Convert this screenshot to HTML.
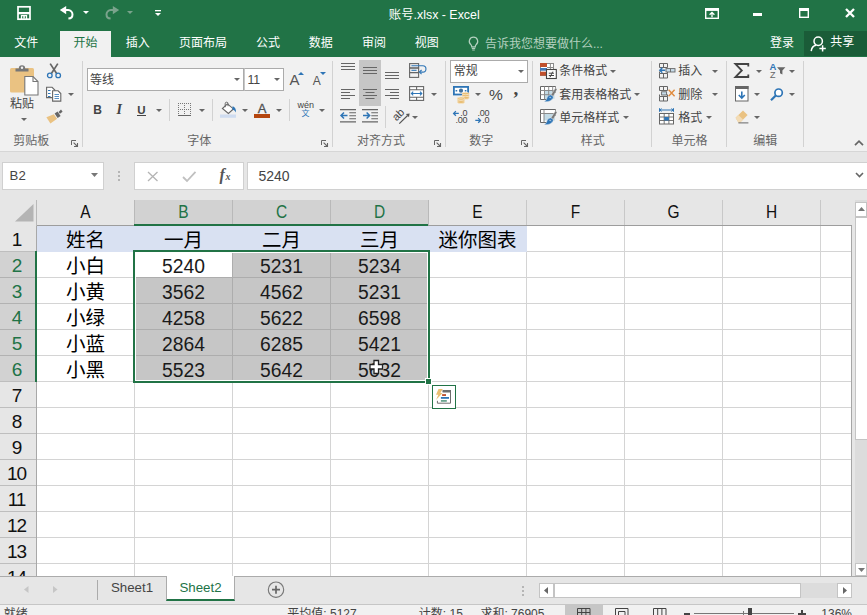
<!DOCTYPE html>
<html lang="zh-CN"><head><meta charset="utf-8"><title>账号.xlsx - Excel</title>
<style>
html,body{margin:0;padding:0}
body{width:867px;height:615px;overflow:hidden;position:relative;background:#e6e6e6;font-family:"Liberation Sans","Noto Sans CJK SC",sans-serif}
.b,.t,.i{position:absolute}
.b{box-sizing:border-box}
.t{white-space:nowrap;line-height:20px;height:20px}
.i{overflow:visible}
</style></head>
<body>
<!-- title bar -->
<div class="b" style="left:0px;top:0px;width:867px;height:57px;background:#217346;"></div>
<svg class="i" style="left:17px;top:6px;" width="14" height="14" viewBox="0 0 14 14"><rect x="1" y=".8" width="12" height="12.400" fill="none" stroke="#fff" stroke-width="1.700"/><rect x="1" y="6" width="12" height="2.300" fill="#fff"/><path d="M4.500 13V9.600h5V13" fill="none" stroke="#fff" stroke-width="1.300"/><rect x="6.300" y="9.600" width="1.500" height="3" fill="#fff"/></svg>
<svg class="i" style="left:59px;top:5px;" width="16" height="15" viewBox="0 0 16 15"><path d="M6 5.100H9.200A4.300 4.300 0 0 1 13.500 9.400C13.500 12 12 13.300 9.400 13.500" fill="none" stroke="#fff" stroke-width="2"/><path d="M.8 5.100L7.200 .9V9.300z" fill="#fff"/></svg>
<svg class="i" style="left:83px;top:11px;" width="6" height="3" viewBox="0 0 6 3"><path d="M0 0h6L3 3z" fill="#fff"/></svg>
<svg class="i" style="left:104px;top:5px;" width="16" height="15" viewBox="0 0 16 15"><path d="M10 5.100H6.800A4.300 4.300 0 0 0 2.500 9.400C2.500 12 4 13.300 6.600 13.500" fill="none" stroke="#7aa38c" stroke-width="2"/><path d="M15.200 5.100L8.800 .9V9.300z" fill="#7aa38c"/></svg>
<svg class="i" style="left:127px;top:11px;" width="6" height="3" viewBox="0 0 6 3"><path d="M0 0h6L3 3z" fill="#7aa38c"/></svg>
<svg class="i" style="left:155px;top:9px;" width="6" height="8" viewBox="0 0 6 8"><rect x="0" y="1" width="6" height="1.300" fill="#fff"/><path d="M0 4h6L3 7z" fill="#fff"/></svg>
<div class="t" style="left:388.8px;top:4.5px;font-size:12.4px;color:#fff;">账号.xlsx - Excel</div>
<svg class="i" style="left:705px;top:7.5px;" width="14" height="11" viewBox="0 0 14 11"><rect x=".7" y=".7" width="12.600" height="9.600" fill="none" stroke="#fff" stroke-width="1.400"/><rect x=".7" y=".7" width="12.600" height="2.200" fill="#fff"/><path d="M7 4.600v4.600M4.600 6.800L7 4.400l2.400 2.400" fill="none" stroke="#fff" stroke-width="1.300"/></svg>
<div class="b" style="left:753px;top:13px;width:9px;height:3px;background:#fff;"></div>
<svg class="i" style="left:799px;top:8px;" width="10" height="10" viewBox="0 0 10 10"><rect x=".7" y=".7" width="8.600" height="8.600" fill="none" stroke="#fff" stroke-width="1.400"/><rect x="0" y="0" width="10" height="3" fill="#fff"/></svg>
<svg class="i" style="left:845px;top:8px;" width="10" height="10" viewBox="0 0 10 10"><path d="M1 1l8 8M9 1l-8 8" stroke="#fff" stroke-width="2.300" fill="none"/></svg>
<!-- ribbon tabs -->
<div class="b" style="left:60px;top:31px;width:51px;height:26px;background:#f1f1f1;"></div>
<div class="t" style="left:14.3px;top:33.0px;font-size:12px;color:#fff;">文件</div>
<div class="t" style="left:73.4px;top:33.0px;font-size:12px;color:#217346;">开始</div>
<div class="t" style="left:125.7px;top:33.0px;font-size:12px;color:#fff;">插入</div>
<div class="t" style="left:179px;top:33.0px;font-size:12px;color:#fff;">页面布局</div>
<div class="t" style="left:256px;top:33.0px;font-size:12px;color:#fff;">公式</div>
<div class="t" style="left:308.7px;top:33.0px;font-size:12px;color:#fff;">数据</div>
<div class="t" style="left:362px;top:33.0px;font-size:12px;color:#fff;">审阅</div>
<div class="t" style="left:414.7px;top:33.0px;font-size:12px;color:#fff;">视图</div>
<svg class="i" style="left:468px;top:36px;" width="11" height="15" viewBox="0 0 11 15"><path d="M5.500 1.200a4.200 4.200 0 0 0-2.600 7.500c.6.6.8 1.300.8 2.100h3.600c0-.8.2-1.500.8-2.100A4.200 4.200 0 0 0 5.500 1.200z" fill="none" stroke="#b3d0bf" stroke-width="1.200"/><path d="M3.800 12.400h3.400M4.200 14h2.600" stroke="#b3d0bf" stroke-width="1.100"/></svg>
<div class="t" style="left:484.9px;top:33.6px;font-size:12px;color:#b3d0bf;">告诉我您想要做什么...</div>
<div class="t" style="left:770.1px;top:32.6px;font-size:12px;color:#fff;">登录</div>
<div class="b" style="left:804px;top:31px;width:63px;height:25px;background:#1a5c38;"></div>
<svg class="i" style="left:810px;top:36px;" width="17" height="16" viewBox="0 0 17 16"><circle cx="8.200" cy="5.200" r="4.200" fill="none" stroke="#fff" stroke-width="1.500"/><path d="M1.200 15.200c.4-3.600 2.500-5.600 4.800-6" fill="none" stroke="#fff" stroke-width="1.500"/><path d="M12.600 9.200v6.400M9.400 12.400h6.400" stroke="#fff" stroke-width="1.500"/></svg>
<div class="t" style="left:830.3px;top:32.2px;font-size:12px;color:#fff;">共享</div>
<!-- ribbon -->
<div class="b" style="left:0px;top:57px;width:867px;height:94px;background:#f1f1f1;"></div>
<div class="b" style="left:0px;top:151px;width:867px;height:1px;background:#d6d6d6;"></div>
<svg class="i" style="left:10px;top:63px;" width="29" height="33" viewBox="0 0 29 33"><rect x="0" y="5" width="24" height="24.500" rx="1.500" fill="#eac282"/><path d="M5.500 8.500v-3h3.300a3.200 3.200 0 0 1 6.400 0h3.300v3z" fill="#777"/><circle cx="12" cy="4.800" r="1.200" fill="#f1f1f1"/><path d="M14.800 13.500h8.200l5 5v13.500h-13.200z" fill="#fff" stroke="#777" stroke-width="1.100"/><path d="M23 13.500v5h5" fill="none" stroke="#777" stroke-width="1.100"/></svg>
<div class="t" style="left:10px;top:94.3px;font-size:12px;color:#444;">粘贴</div>
<svg class="i" style="left:21px;top:118px;" width="6" height="3" viewBox="0 0 6 3"><path d="M0 0h6L3 3z" fill="#666"/></svg>
<svg class="i" style="left:46px;top:63px;" width="16" height="16" viewBox="0 0 16 16"><path d="M4.200 .6L10.600 10.500M11.800 .6L5.400 10.500" stroke="#666" stroke-width="1.700" fill="none"/><circle cx="3.800" cy="12.400" r="2.300" fill="none" stroke="#2e75b6" stroke-width="1.300"/><circle cx="12.200" cy="12.400" r="2.300" fill="none" stroke="#2e75b6" stroke-width="1.300"/></svg>
<svg class="i" style="left:46px;top:86px;" width="16" height="16" viewBox="0 0 16 16"><path d="M.6 1.300h5.500l2.700 2.700v7.600H.6z" fill="#fff" stroke="#666" stroke-width="1.100"/><path d="M6.600 4.800h5.500l2.700 2.700v7.600H6.600z" fill="#fff" stroke="#666" stroke-width="1.100"/><path d="M2 4.500h2.500M2 7.500h2.500M2 10.500h2.500" stroke="#2e75b6" stroke-width="1"/><path d="M8.500 8.500h4.500M8.500 10.500h4.500M8.500 12.500h4.500" stroke="#2e75b6" stroke-width=".8"/></svg>
<svg class="i" style="left:68px;top:93px;" width="6" height="3" viewBox="0 0 6 3"><path d="M0 0h6L3 3z" fill="#666"/></svg>
<svg class="i" style="left:46px;top:109px;" width="17" height="15" viewBox="0 0 17 15"><path d="M.4 8.200L7.800 5.200l3.300 4.600L4.400 14.400z" fill="#eac282"/><path d="M8.600 4.600l3-2 3 4.400-3 2z" fill="#666"/><path d="M12.600 3l2.400-2.400 1.600 2.200-2.600 2z" fill="#666"/></svg>
<div class="t" style="left:13.3px;top:130.6px;font-size:12px;color:#666;">剪贴板</div>
<svg class="i" style="left:71px;top:140px;" width="7" height="7" viewBox="0 0 7 7"><path d="M.5 5V.5H5" fill="none" stroke="#666" stroke-width="1"/><path d="M2.600 2.600L6 6M6.500 3v3.500H3" fill="none" stroke="#666" stroke-width="1.100"/></svg>
<div class="b" style="left:82px;top:61px;width:1px;height:86px;background:#d2d2d2;"></div>
<div class="b" style="left:87px;top:68px;width:157px;height:23px;background:#fff;border:1px solid #ababab;"></div>
<div class="b" style="left:244px;top:68px;width:40px;height:23px;background:#fff;border:1px solid #ababab;border-left-color:#c8c8c8;"></div>
<div class="t" style="left:90px;top:69.5px;font-size:12px;color:#444;">等线</div>
<svg class="i" style="left:234px;top:78px;" width="6" height="3" viewBox="0 0 6 3"><path d="M0 0h6L3 3z" fill="#666"/></svg>
<div class="t" style="left:247.4px;top:69.6px;font-size:12.4px;color:#444;">11</div>
<svg class="i" style="left:274px;top:78px;" width="6" height="3" viewBox="0 0 6 3"><path d="M0 0h6L3 3z" fill="#666"/></svg>
<div class="t" style="left:289.6px;top:70.3px;font-size:15px;color:#555;">A</div>
<svg class="i" style="left:298px;top:72px;" width="6" height="3" viewBox="0 0 6 3"><path d="M0 3h6L3 0z" fill="#2e75b6"/></svg>
<div class="t" style="left:312.8px;top:71.2px;font-size:12px;color:#555;">A</div>
<svg class="i" style="left:320px;top:72px;" width="6" height="3" viewBox="0 0 6 3"><path d="M0 0h6L3 3z" fill="#2e75b6"/></svg>
<div class="t" style="left:93.2px;top:100.0px;font-size:12px;color:#444;font-weight:bold;">B</div>
<div class="t" style="left:116.4px;top:100.0px;font-size:14px;color:#444;font-weight:bold;font-style:italic;font-family:'Liberation Serif',serif;">I</div>
<div class="t" style="left:137.2px;top:99.8px;font-size:11.5px;color:#444;font-weight:bold;">U</div>
<div class="b" style="left:137px;top:115px;width:9px;height:1px;background:#444;"></div>
<svg class="i" style="left:156px;top:109px;" width="6" height="3" viewBox="0 0 6 3"><path d="M0 0h6L3 3z" fill="#666"/></svg>
<div class="b" style="left:169px;top:99px;width:1px;height:22px;background:#d2d2d2;"></div>
<svg class="i" style="left:178px;top:103px;" width="13" height="13" viewBox="0 0 13 13"><g fill="#777" shape-rendering="crispEdges"><rect x="0" y="0" width="1" height="1"/><rect x="0" y="0" width="1" height="1"/><rect x="0" y="6" width="1" height="1"/><rect x="6" y="0" width="1" height="1"/><rect x="0" y="12" width="1" height="1"/><rect x="12" y="0" width="1" height="1"/><rect x="2" y="0" width="1" height="1"/><rect x="0" y="2" width="1" height="1"/><rect x="2" y="6" width="1" height="1"/><rect x="6" y="2" width="1" height="1"/><rect x="2" y="12" width="1" height="1"/><rect x="12" y="2" width="1" height="1"/><rect x="4" y="0" width="1" height="1"/><rect x="0" y="4" width="1" height="1"/><rect x="4" y="6" width="1" height="1"/><rect x="6" y="4" width="1" height="1"/><rect x="4" y="12" width="1" height="1"/><rect x="12" y="4" width="1" height="1"/><rect x="6" y="0" width="1" height="1"/><rect x="0" y="6" width="1" height="1"/><rect x="6" y="6" width="1" height="1"/><rect x="6" y="6" width="1" height="1"/><rect x="6" y="12" width="1" height="1"/><rect x="12" y="6" width="1" height="1"/><rect x="8" y="0" width="1" height="1"/><rect x="0" y="8" width="1" height="1"/><rect x="8" y="6" width="1" height="1"/><rect x="6" y="8" width="1" height="1"/><rect x="8" y="12" width="1" height="1"/><rect x="12" y="8" width="1" height="1"/><rect x="10" y="0" width="1" height="1"/><rect x="0" y="10" width="1" height="1"/><rect x="10" y="6" width="1" height="1"/><rect x="6" y="10" width="1" height="1"/><rect x="10" y="12" width="1" height="1"/><rect x="12" y="10" width="1" height="1"/><rect x="12" y="0" width="1" height="1"/><rect x="0" y="12" width="1" height="1"/><rect x="12" y="6" width="1" height="1"/><rect x="6" y="12" width="1" height="1"/><rect x="12" y="12" width="1" height="1"/><rect x="12" y="12" width="1" height="1"/></g><rect x="0" y="12" width="13" height="1" fill="#666" shape-rendering="crispEdges"/></svg>
<svg class="i" style="left:199px;top:109px;" width="6" height="3" viewBox="0 0 6 3"><path d="M0 0h6L3 3z" fill="#666"/></svg>
<div class="b" style="left:212px;top:99px;width:1px;height:22px;background:#d2d2d2;"></div>
<svg class="i" style="left:220px;top:102px;" width="17" height="16" viewBox="0 0 17 16"><rect x="0" y="12.500" width="16" height="3.300" fill="#cfdcf0"/><path d="M7.400 1.900l6 5-5 4.600-6-5z" fill="#fff" stroke="#666" stroke-width="1.100"/><path d="M5.200 5.200V1.600a1.400 1.400 0 0 1 2.800 0v2.600" fill="none" stroke="#666" stroke-width="1"/><path d="M12.600 4.300c2.300.5 3.600 2.600 3.300 6.300-.8-1.600-1.800-2.500-3.600-3z" fill="#2e75b6"/></svg>
<svg class="i" style="left:242px;top:109px;" width="6" height="3" viewBox="0 0 6 3"><path d="M0 0h6L3 3z" fill="#666"/></svg>
<div class="t" style="left:257.7px;top:99.0px;font-size:13px;color:#505050;-webkit-text-stroke:.3px #505050;">A</div>
<div class="b" style="left:254px;top:114px;width:16px;height:4px;background:#b5460f;"></div>
<svg class="i" style="left:276px;top:109px;" width="6" height="3" viewBox="0 0 6 3"><path d="M0 0h6L3 3z" fill="#666"/></svg>
<div class="b" style="left:289px;top:99px;width:1px;height:22px;background:#d2d2d2;"></div>
<div class="t" style="left:297.6px;top:95.4px;font-size:9px;color:#444;">wén</div>
<div class="t" style="left:301.4px;top:104.3px;font-size:8px;color:#2e75b6;">文</div>
<svg class="i" style="left:319px;top:109px;" width="6" height="3" viewBox="0 0 6 3"><path d="M0 0h6L3 3z" fill="#666"/></svg>
<div class="t" style="left:187.2px;top:130.6px;font-size:12px;color:#666;">字体</div>
<svg class="i" style="left:321px;top:140px;" width="7" height="7" viewBox="0 0 7 7"><path d="M.5 5V.5H5" fill="none" stroke="#666" stroke-width="1"/><path d="M2.600 2.600L6 6M6.500 3v3.500H3" fill="none" stroke="#666" stroke-width="1.100"/></svg>
<div class="b" style="left:332px;top:61px;width:1px;height:86px;background:#d2d2d2;"></div>
<div class="b" style="left:359px;top:60px;width:22px;height:46px;background:#c6c6c6;"></div>
<svg class="i" style="left:341px;top:62px;" width="14" height="18" viewBox="0 0 14 18"><path d="M0 1.500H14M0 4.500H14M0 7.500H14" stroke="#666" stroke-width="1.100" fill="none"/></svg>
<svg class="i" style="left:363px;top:62px;" width="14" height="18" viewBox="0 0 14 18"><path d="M0 5.500H14M0 8.500H14M0 11.500H14" stroke="#666" stroke-width="1.100" fill="none"/></svg>
<svg class="i" style="left:385px;top:62px;" width="14" height="18" viewBox="0 0 14 18"><path d="M0 10.500H14M0 13.500H14M0 16.500H14" stroke="#666" stroke-width="1.100" fill="none"/></svg>
<svg class="i" style="left:341px;top:88px;" width="14" height="12" viewBox="0 0 14 12"><path d="M0 1.500H14M0 4.500H9M0 7.500H14M0 10.500H9" stroke="#666" stroke-width="1.100" fill="none"/></svg>
<svg class="i" style="left:363px;top:88px;" width="14" height="12" viewBox="0 0 14 12"><path d="M0 1.500H14M2.500 4.500H11.500M0 7.500H14M2.500 10.500H11.500" stroke="#666" stroke-width="1.100" fill="none"/></svg>
<svg class="i" style="left:385px;top:88px;" width="14" height="12" viewBox="0 0 14 12"><path d="M0 1.500H14M5 4.500H14M0 7.500H14M5 10.500H14" stroke="#666" stroke-width="1.100" fill="none"/></svg>
<svg class="i" style="left:409px;top:63px;" width="17" height="16" viewBox="0 0 17 16"><rect x=".6" y=".6" width="9" height="4.400" fill="none" stroke="#666" stroke-width="1.100"/><rect x=".6" y="5" width="9" height="4.600" fill="none" stroke="#666" stroke-width="1.100"/><rect x=".6" y="9.600" width="9" height="4.800" fill="none" stroke="#666" stroke-width="1.100"/><path d="M2.400 2.800h11.400a2.500 2.500 0 0 1 0 6.300h-3" fill="none" stroke="#2e75b6" stroke-width="1.100"/><path d="M12.600 7l-2.200 2.100 2.200 2.100" fill="none" stroke="#2e75b6" stroke-width="1.100"/><path d="M2.400 7.300h5.200" stroke="#2e75b6" stroke-width="1.100"/></svg>
<svg class="i" style="left:409px;top:86px;" width="16" height="15" viewBox="0 0 16 15"><rect x=".6" y=".6" width="14" height="13.800" fill="#fff" stroke="#666" stroke-width="1.100"/><path d="M.6 3.800h14M.6 11.200h14M7.600 .6v3.200M7.600 11.200v3.200" stroke="#666" stroke-width="1.100"/><path d="M2.400 7.500h10.400M4.200 5.700L2.400 7.500l1.800 1.800M11 5.700l1.800 1.800L11 9.300" fill="none" stroke="#2e75b6" stroke-width="1.100"/></svg>
<svg class="i" style="left:431px;top:93px;" width="6" height="3" viewBox="0 0 6 3"><path d="M0 0h6L3 3z" fill="#666"/></svg>
<svg class="i" style="left:340px;top:109px;" width="16" height="14" viewBox="0 0 16 14"><path d="M0 .6h16M0 12.900h16M9.300 3.700h6.700M9.300 6.700h6.700M9.300 9.700h6.700" stroke="#666" stroke-width="1.100"/><path d="M7.500 6.500h-6M4 3.500l-3 3 3 3" fill="none" stroke="#2e75b6" stroke-width="1.500"/></svg>
<svg class="i" style="left:362px;top:109px;" width="16" height="14" viewBox="0 0 16 14"><path d="M0 .6h16M0 12.900h16M9.300 3.700h6.700M9.300 6.700h6.700M9.300 9.700h6.700" stroke="#666" stroke-width="1.100"/><path d="M1 6.500h6M4.600 3.500l3 3-3 3" fill="none" stroke="#2e75b6" stroke-width="1.500"/></svg>
<div class="b" style="left:385px;top:106px;width:1px;height:22px;background:#d2d2d2;"></div>
<svg class="i" style="left:390px;top:106px;" width="22" height="20" viewBox="0 0 22 20"><text x="8" y="8.300" transform="rotate(-45 8 8.300)" text-anchor="middle" dominant-baseline="central" font-family="Liberation Sans, sans-serif" font-size="11" fill="#444">ab</text><path d="M9.300 17.600L17.600 9.500" fill="none" stroke="#555" stroke-width="1.200"/><path d="M19.600 7.500l-.6 3.800-3.200-3.200z" fill="#555"/></svg>
<svg class="i" style="left:412px;top:116px;" width="6" height="3" viewBox="0 0 6 3"><path d="M0 0h6L3 3z" fill="#666"/></svg>
<div class="t" style="left:357px;top:130.6px;font-size:12px;color:#666;">对齐方式</div>
<svg class="i" style="left:434px;top:140px;" width="7" height="7" viewBox="0 0 7 7"><path d="M.5 5V.5H5" fill="none" stroke="#666" stroke-width="1"/><path d="M2.600 2.600L6 6M6.500 3v3.500H3" fill="none" stroke="#666" stroke-width="1.100"/></svg>
<div class="b" style="left:445px;top:61px;width:1px;height:86px;background:#d2d2d2;"></div>
<div class="b" style="left:450px;top:60px;width:78px;height:23px;background:#fff;border:1px solid #ababab;"></div>
<div class="t" style="left:453.8px;top:61.4px;font-size:12px;color:#444;">常规</div>
<svg class="i" style="left:518px;top:70px;" width="6" height="3" viewBox="0 0 6 3"><path d="M0 0h6L3 3z" fill="#666"/></svg>
<svg class="i" style="left:453px;top:86px;" width="17" height="17" viewBox="0 0 17 17"><rect x=".9" y=".9" width="14.200" height="7.600" fill="#fff" stroke="#2e75b6" stroke-width="1.800"/><circle cx="8" cy="4.700" r="2.100" fill="#41719c"/><path d="M2.600 4.700h1.600M11.800 4.700h1.600" stroke="#2e75b6" stroke-width="1.400"/><g fill="#e9bd72" stroke="#f6ead2" stroke-width=".7"><ellipse cx="12.600" cy="7.800" rx="3.700" ry="1.500"/><ellipse cx="12.600" cy="9.800" rx="3.700" ry="1.500"/><ellipse cx="12.600" cy="11.800" rx="3.700" ry="1.500"/><ellipse cx="8" cy="12.400" rx="3.700" ry="1.500"/><ellipse cx="8" cy="14.300" rx="3.700" ry="1.500"/><ellipse cx="8" cy="16" rx="3.700" ry="1.500"/></g></svg>
<svg class="i" style="left:475px;top:93px;" width="6" height="3" viewBox="0 0 6 3"><path d="M0 0h6L3 3z" fill="#666"/></svg>
<div class="t" style="left:489px;top:84.6px;font-size:15.5px;color:#444;">%</div>
<div class="t" style="left:513.6px;top:79.0px;font-size:19px;color:#444;font-family:'Liberation Serif',serif;font-weight:bold;">,</div>
<div class="t" style="left:460.2px;top:103.4px;font-size:9px;color:#444;letter-spacing:-.3px;">.0</div>
<div class="t" style="left:455.5px;top:110.4px;font-size:9px;color:#444;letter-spacing:-.3px;">.00</div>
<svg class="i" style="left:453px;top:110px;" width="8" height="7" viewBox="0 0 8 7"><path d="M5.800 3.400h-5M2.900 1.100l-2.300 2.300 2.300 2.300" fill="none" stroke="#2e75b6" stroke-width="1.300"/></svg>
<div class="t" style="left:477.5px;top:103.4px;font-size:9px;color:#444;letter-spacing:-.3px;">.00</div>
<div class="t" style="left:482.2px;top:110.4px;font-size:9px;color:#444;letter-spacing:-.3px;">.0</div>
<svg class="i" style="left:475px;top:117px;" width="8" height="7" viewBox="0 0 8 7"><path d="M0.300 3.400h5M3.200 1.100l2.300 2.300-2.300 2.300" fill="none" stroke="#2e75b6" stroke-width="1.300"/></svg>
<div class="t" style="left:469.2px;top:130.6px;font-size:12px;color:#666;">数字</div>
<svg class="i" style="left:521px;top:140px;" width="7" height="7" viewBox="0 0 7 7"><path d="M.5 5V.5H5" fill="none" stroke="#666" stroke-width="1"/><path d="M2.600 2.600L6 6M6.500 3v3.500H3" fill="none" stroke="#666" stroke-width="1.100"/></svg>
<div class="b" style="left:532px;top:61px;width:1px;height:86px;background:#d2d2d2;"></div>
<svg class="i" style="left:540px;top:63px;" width="17" height="16" viewBox="0 0 17 16"><rect x=".5" y=".5" width="13" height="12" fill="#fff" stroke="#8a8a8a" stroke-width="1"/><path d="M7 4.500h6.500M7 8.500h6.500M10.400 .5v7" stroke="#8a8a8a" stroke-width="1"/><rect x="0" y="0" width="7" height="4" fill="#c0502d"/><rect x="0" y="5" width="7" height="2.700" fill="#3f78b8"/><rect x="0" y="8.700" width="7" height="4" fill="#c0502d"/><rect x="6.500" y="6.500" width="9.800" height="9" fill="#fff" stroke="#444" stroke-width="1.100"/><path d="M8.800 10.200h5.200M8.800 12.500h5.200M12.800 8.600l-2.800 5.600" stroke="#444" stroke-width="1" fill="none"/></svg>
<div class="t" style="left:559.2px;top:61.4px;font-size:12px;color:#444;">条件格式</div>
<svg class="i" style="left:610px;top:70px;" width="6" height="3" viewBox="0 0 6 3"><path d="M0 0h6L3 3z" fill="#666"/></svg>
<svg class="i" style="left:540px;top:86px;" width="17" height="17" viewBox="0 0 17 17"><path d="M15.500 7V.5H.5v13H8" fill="#fff" stroke="#666" stroke-width="1"/><rect x="4.500" y="4.500" width="10" height="8.500" fill="#c3dbe6"/><path d="M.5 4.500h15M.5 8.700h13M4.500 .5v13M8.700 .5v13M12.700 .5v9" stroke="#8a8a8a" stroke-width="1"/><path d="M15.600 1.600l1.400 1.900-3.800 7.100-2.400-1.600z" fill="#777" stroke="#f1f1f1" stroke-width=".5"/><path d="M10.900 8.800l2.500 1.900c-.2 3-3.700 5.500-9.500 5 2-.9 2.600-2.100 3-3.600.5-1.800 1.900-3 4-3.300z" fill="#2e75b6" stroke="#f1f1f1" stroke-width=".5"/><path d="M9.400 11.400c.8-.4 1.600 0 1.600.8" fill="none" stroke="#e8f0f8" stroke-width=".8"/></svg>
<div class="t" style="left:559.2px;top:84.6px;font-size:12px;color:#444;">套用表格格式</div>
<svg class="i" style="left:634px;top:93px;" width="6" height="3" viewBox="0 0 6 3"><path d="M0 0h6L3 3z" fill="#666"/></svg>
<svg class="i" style="left:540px;top:109px;" width="17" height="17" viewBox="0 0 17 17"><path d="M15.500 7V.5H.5v13H8" fill="#fff" stroke="#666" stroke-width="1"/><rect x="4" y="4.500" width="11" height="7" fill="#c3dbe6"/><path d="M.5 4.500h15M4 .5v13" stroke="#8a8a8a" stroke-width="1"/><path d="M15.600 1.600l1.400 1.900-3.800 7.100-2.400-1.600z" fill="#777" stroke="#f1f1f1" stroke-width=".5"/><path d="M10.900 8.800l2.500 1.900c-.2 3-3.700 5.500-9.500 5 2-.9 2.600-2.100 3-3.600.5-1.800 1.900-3 4-3.300z" fill="#2e75b6" stroke="#f1f1f1" stroke-width=".5"/><path d="M9.400 11.400c.8-.4 1.600 0 1.600.8" fill="none" stroke="#e8f0f8" stroke-width=".8"/></svg>
<div class="t" style="left:559.2px;top:107.5px;font-size:12px;color:#444;">单元格样式</div>
<svg class="i" style="left:623px;top:116px;" width="6" height="3" viewBox="0 0 6 3"><path d="M0 0h6L3 3z" fill="#666"/></svg>
<div class="t" style="left:580.7px;top:130.6px;font-size:12px;color:#666;">样式</div>
<div class="b" style="left:651px;top:61px;width:1px;height:86px;background:#d2d2d2;"></div>
<svg class="i" style="left:659px;top:63px;" width="17" height="16" viewBox="0 0 17 16"><path d="M.5 .5h8v4h-8zM.5 10.500h8v4.500h-8zM4.500 .5v4M4.500 10.500v4.500M.5 10.500v-2M8.500 10.500v-2" fill="none" stroke="#666" stroke-width="1"/><rect x="7" y="5.600" width="9" height="3.400" fill="#c7dcea" stroke="#666" stroke-width=".9"/><path d="M11.500 5.600v3.400" stroke="#666" stroke-width=".9"/><path d="M6.200 7.300H.8M3.300 4.800L.8 7.300l2.500 2.500" fill="none" stroke="#2e75b6" stroke-width="1.400"/></svg>
<div class="t" style="left:678.2px;top:61.4px;font-size:12px;color:#444;">插入</div>
<svg class="i" style="left:712px;top:70px;" width="6" height="3" viewBox="0 0 6 3"><path d="M0 0h6L3 3z" fill="#666"/></svg>
<svg class="i" style="left:659px;top:86px;" width="17" height="16" viewBox="0 0 17 16"><path d="M.5 .5h8v4h-8zM.5 10.500h8v4.500h-8zM4.500 .5v4M4.500 10.500v4.500M.5 10.500v-2M8.500 10.500v-2" fill="none" stroke="#666" stroke-width="1"/><rect x="2.600" y="5.800" width="5" height="3.200" fill="#c7dcea" stroke="#666" stroke-width=".9"/><path d="M9.600 3.800l6 6.400M15.600 3.800l-6 6.400" stroke="#e08a3c" stroke-width="1.400" fill="none"/></svg>
<div class="t" style="left:678.2px;top:84.6px;font-size:12px;color:#444;">删除</div>
<svg class="i" style="left:712px;top:93px;" width="6" height="3" viewBox="0 0 6 3"><path d="M0 0h6L3 3z" fill="#666"/></svg>
<svg class="i" style="left:659px;top:108px;" width="16" height="17" viewBox="0 0 16 17"><path d="M.5 2h14M.5 .2v3.600M14.500 .2v3.600M2.600 .6L.7 2l1.900 1.400M12.400 .6L14.300 2l-1.900 1.400" fill="none" stroke="#2e75b6" stroke-width="1"/><rect x=".5" y="5.500" width="14" height="10.500" fill="#fff" stroke="#666" stroke-width="1"/><path d="M.5 9h14M.5 12.500h14M5.200 5.500v10.500M9.900 5.500v10.500" stroke="#666" stroke-width=".9"/><rect x="5.200" y="9" width="4.700" height="3.500" fill="#2e75b6"/></svg>
<div class="t" style="left:678.2px;top:107.5px;font-size:12px;color:#444;">格式</div>
<svg class="i" style="left:706px;top:116px;" width="6" height="3" viewBox="0 0 6 3"><path d="M0 0h6L3 3z" fill="#666"/></svg>
<div class="t" style="left:671.4px;top:130.6px;font-size:12px;color:#666;">单元格</div>
<div class="b" style="left:726px;top:61px;width:1px;height:86px;background:#d2d2d2;"></div>
<svg class="i" style="left:734px;top:63px;" width="15" height="15" viewBox="0 0 15 15"><path d="M14.300 3.400V1H1.400l6.400 6.500L1.400 14h12.900v-2.400" fill="none" stroke="#444" stroke-width="1.800" stroke-linejoin="miter"/></svg>
<svg class="i" style="left:756px;top:70px;" width="6" height="3" viewBox="0 0 6 3"><path d="M0 0h6L3 3z" fill="#666"/></svg>
<div class="t" style="left:769.6px;top:56.9px;font-size:9.5px;color:#2e75b6;font-weight:bold;">A</div>
<div class="t" style="left:770px;top:65.4px;font-size:9px;color:#666;">Z</div>
<svg class="i" style="left:777px;top:67px;" width="9" height="8" viewBox="0 0 9 8"><path d="M0 .3h8.400L5.400 3.600V7.400L3 6.200V3.600z" fill="#666"/></svg>
<svg class="i" style="left:789px;top:70px;" width="6" height="3" viewBox="0 0 6 3"><path d="M0 0h6L3 3z" fill="#666"/></svg>
<svg class="i" style="left:735px;top:86px;" width="14" height="16" viewBox="0 0 14 16"><rect x=".5" y=".5" width="12.500" height="14.500" fill="#fff" stroke="#666" stroke-width="1"/><rect x="0" y="0" width="13.500" height="3" fill="#666"/><path d="M6.800 5.400v6.400M3.800 9l3 3 3-3" fill="none" stroke="#2e75b6" stroke-width="1.600"/></svg>
<svg class="i" style="left:754px;top:93px;" width="6" height="3" viewBox="0 0 6 3"><path d="M0 0h6L3 3z" fill="#666"/></svg>
<svg class="i" style="left:770px;top:88px;" width="14" height="13" viewBox="0 0 14 13"><circle cx="8.600" cy="4.700" r="3.700" fill="#fff" stroke="#2e75b6" stroke-width="1.700"/><path d="M5.800 7.500L1 12.200" stroke="#2e75b6" stroke-width="2.200" fill="none"/></svg>
<svg class="i" style="left:789px;top:93px;" width="6" height="3" viewBox="0 0 6 3"><path d="M0 0h6L3 3z" fill="#666"/></svg>
<svg class="i" style="left:735px;top:110px;" width="14" height="14" viewBox="0 0 14 14"><path d="M.6 7.800L8 .6l4.600 4.400-7.400 7.400H3.400z" fill="#eac282"/><path d="M.6 7.800l2.800-2.700 4.600 4.500-2.800 2.800H3.400z" fill="#f3dcb6"/><path d="M3.400 12.900h10" stroke="#666" stroke-width="1"/></svg>
<svg class="i" style="left:754px;top:116px;" width="6" height="3" viewBox="0 0 6 3"><path d="M0 0h6L3 3z" fill="#666"/></svg>
<div class="t" style="left:753.2px;top:130.6px;font-size:12px;color:#666;">编辑</div>
<div class="b" style="left:803px;top:61px;width:1px;height:86px;background:#d2d2d2;"></div>
<svg class="i" style="left:854px;top:140px;" width="10" height="6" viewBox="0 0 10 6"><path d="M1 5.200L5 1.200l4 4" fill="none" stroke="#666" stroke-width="1.700"/></svg>
<!-- formula bar -->
<div class="b" style="left:0px;top:152px;width:867px;height:48px;background:#e6e6e6;"></div>
<div class="b" style="left:2px;top:162px;width:102px;height:28px;background:#fff;border:1px solid #d0d0d0;"></div>
<div class="t" style="left:9.6px;top:165.6px;font-size:13.2px;color:#444;">B2</div>
<svg class="i" style="left:91px;top:173px;" width="7" height="4" viewBox="0 0 7 4"><path d="M0 0h7L3.500 4z" fill="#777"/></svg>
<div class="b" style="left:118px;top:171px;width:2px;height:2px;background:#b5b5b5;"></div>
<div class="b" style="left:118px;top:175px;width:2px;height:2px;background:#b5b5b5;"></div>
<div class="b" style="left:118px;top:179px;width:2px;height:2px;background:#b5b5b5;"></div>
<div class="b" style="left:134px;top:162px;width:110px;height:28px;background:#fff;border:1px solid #d0d0d0;"></div>
<svg class="i" style="left:147px;top:171px;" width="12" height="11" viewBox="0 0 12 11"><path d="M1 1l9.500 9M10.500 1L1 10" stroke="#b4b4b4" stroke-width="1.300" fill="none"/></svg>
<svg class="i" style="left:182px;top:171px;" width="15" height="11" viewBox="0 0 15 11"><path d="M1 6l4 4L13.500 .8" stroke="#c0c0c0" stroke-width="1.800" fill="none"/></svg>
<div class="t" style="left:219.6px;top:165.2px;font-size:16px;color:#555;font-family:'Liberation Serif',serif;font-style:italic;font-weight:bold;">f</div>
<div class="t" style="left:225.4px;top:167.4px;font-size:10px;color:#555;font-family:'Liberation Serif',serif;font-style:italic;font-weight:bold;">x</div>
<div class="b" style="left:247px;top:162px;width:625px;height:28px;background:#fff;border:1px solid #d0d0d0;"></div>
<div class="t" style="left:258.6px;top:165.6px;font-size:14px;color:#444;letter-spacing:-.1px;">5240</div>
<svg class="i" style="left:855px;top:172px;" width="9" height="6" viewBox="0 0 9 6"><path d="M1 1l3.500 3.500L8 1" fill="none" stroke="#666" stroke-width="1.600"/></svg>
<!-- grid -->
<div class="b" style="left:0px;top:200px;width:855px;height:377px;background:#e6e6e6;"></div>
<div class="b" style="left:37px;top:226px;width:815px;height:350px;background:#fff;"></div>
<div class="b" style="left:134px;top:200px;width:294px;height:24px;background:#d2d2d2;"></div>
<div class="t" style="left:37px;top:202.0px;font-size:18px;color:#111;width:97px;text-align:center;transform:scaleX(.86);">A</div>
<div class="b" style="left:134px;top:200px;width:1px;height:25px;background:#b9b9b9;"></div>
<div class="t" style="left:135px;top:202.0px;font-size:18px;color:#217346;width:97px;text-align:center;transform:scaleX(.86);">B</div>
<div class="b" style="left:232px;top:200px;width:1px;height:25px;background:#b9b9b9;"></div>
<div class="t" style="left:233px;top:202.0px;font-size:18px;color:#217346;width:97px;text-align:center;transform:scaleX(.86);">C</div>
<div class="b" style="left:330px;top:200px;width:1px;height:25px;background:#b9b9b9;"></div>
<div class="t" style="left:331px;top:202.0px;font-size:18px;color:#217346;width:97px;text-align:center;transform:scaleX(.86);">D</div>
<div class="b" style="left:428px;top:200px;width:1px;height:25px;background:#b9b9b9;"></div>
<div class="t" style="left:429px;top:202.0px;font-size:18px;color:#111;width:97px;text-align:center;transform:scaleX(.86);">E</div>
<div class="b" style="left:526px;top:200px;width:1px;height:25px;background:#c8c8c8;"></div>
<div class="t" style="left:527px;top:202.0px;font-size:18px;color:#111;width:97px;text-align:center;transform:scaleX(.86);">F</div>
<div class="b" style="left:624px;top:200px;width:1px;height:25px;background:#c8c8c8;"></div>
<div class="t" style="left:625px;top:202.0px;font-size:18px;color:#111;width:97px;text-align:center;transform:scaleX(.86);">G</div>
<div class="b" style="left:722px;top:200px;width:1px;height:25px;background:#c8c8c8;"></div>
<div class="t" style="left:723px;top:202.0px;font-size:18px;color:#111;width:97px;text-align:center;transform:scaleX(.86);">H</div>
<div class="b" style="left:820px;top:200px;width:1px;height:25px;background:#c8c8c8;"></div>
<div class="b" style="left:36px;top:200px;width:1px;height:26px;background:#b9b9b9;"></div>
<div class="b" style="left:37px;top:225px;width:97px;height:1px;background:#9d9d9d;"></div>
<div class="b" style="left:428px;top:225px;width:424px;height:1px;background:#9d9d9d;"></div>
<div class="b" style="left:134px;top:224px;width:294px;height:2px;background:#217346;"></div>
<svg class="i" style="left:15px;top:204px;" width="19" height="18" viewBox="0 0 19 18"><path d="M18.500 0V17.500H0z" fill="#b4b4b4"/></svg>
<div class="b" style="left:0px;top:252px;width:35px;height:130px;background:#d2d2d2;"></div>
<div class="t" style="left:0px;top:230.3px;font-size:19px;color:#111;width:33px;text-align:center;letter-spacing:-1px;">1</div>
<div class="b" style="left:0px;top:251px;width:36px;height:1px;background:#bebebe;"></div>
<div class="t" style="left:0px;top:256.3px;font-size:19px;color:#217346;width:33px;text-align:center;letter-spacing:-1px;">2</div>
<div class="b" style="left:0px;top:277px;width:36px;height:1px;background:#b2b2b2;"></div>
<div class="t" style="left:0px;top:282.3px;font-size:19px;color:#217346;width:33px;text-align:center;letter-spacing:-1px;">3</div>
<div class="b" style="left:0px;top:303px;width:36px;height:1px;background:#b2b2b2;"></div>
<div class="t" style="left:0px;top:308.3px;font-size:19px;color:#217346;width:33px;text-align:center;letter-spacing:-1px;">4</div>
<div class="b" style="left:0px;top:329px;width:36px;height:1px;background:#b2b2b2;"></div>
<div class="t" style="left:0px;top:334.3px;font-size:19px;color:#217346;width:33px;text-align:center;letter-spacing:-1px;">5</div>
<div class="b" style="left:0px;top:355px;width:36px;height:1px;background:#b2b2b2;"></div>
<div class="t" style="left:0px;top:360.3px;font-size:19px;color:#217346;width:33px;text-align:center;letter-spacing:-1px;">6</div>
<div class="b" style="left:0px;top:381px;width:36px;height:1px;background:#bebebe;"></div>
<div class="t" style="left:0px;top:386.3px;font-size:19px;color:#111;width:33px;text-align:center;letter-spacing:-1px;">7</div>
<div class="b" style="left:0px;top:407px;width:36px;height:1px;background:#bebebe;"></div>
<div class="t" style="left:0px;top:412.3px;font-size:19px;color:#111;width:33px;text-align:center;letter-spacing:-1px;">8</div>
<div class="b" style="left:0px;top:433px;width:36px;height:1px;background:#bebebe;"></div>
<div class="t" style="left:0px;top:438.3px;font-size:19px;color:#111;width:33px;text-align:center;letter-spacing:-1px;">9</div>
<div class="b" style="left:0px;top:459px;width:36px;height:1px;background:#bebebe;"></div>
<div class="t" style="left:0px;top:464.3px;font-size:19px;color:#111;width:33px;text-align:center;letter-spacing:-1px;">10</div>
<div class="b" style="left:0px;top:485px;width:36px;height:1px;background:#bebebe;"></div>
<div class="t" style="left:0px;top:490.3px;font-size:19px;color:#111;width:33px;text-align:center;letter-spacing:-1px;">11</div>
<div class="b" style="left:0px;top:511px;width:36px;height:1px;background:#bebebe;"></div>
<div class="t" style="left:0px;top:516.3px;font-size:19px;color:#111;width:33px;text-align:center;letter-spacing:-1px;">12</div>
<div class="b" style="left:0px;top:537px;width:36px;height:1px;background:#bebebe;"></div>
<div class="t" style="left:0px;top:542.3px;font-size:19px;color:#111;width:33px;text-align:center;letter-spacing:-1px;">13</div>
<div class="b" style="left:0px;top:563px;width:36px;height:1px;background:#bebebe;"></div>
<div class="t" style="left:0px;top:568.3px;font-size:19px;color:#111;width:33px;text-align:center;letter-spacing:-1px;clip-path:inset(0 0 12px 0);">14</div>
<div class="b" style="left:36px;top:226px;width:1px;height:350px;background:#a8a8a8;"></div>
<div class="b" style="left:35px;top:251px;width:2px;height:131px;background:#217346;"></div>
<div class="b" style="left:134px;top:226px;width:1px;height:350px;background:#d4d4d4;"></div>
<div class="b" style="left:232px;top:226px;width:1px;height:350px;background:#d4d4d4;"></div>
<div class="b" style="left:330px;top:226px;width:1px;height:350px;background:#d4d4d4;"></div>
<div class="b" style="left:428px;top:226px;width:1px;height:350px;background:#d4d4d4;"></div>
<div class="b" style="left:526px;top:226px;width:1px;height:350px;background:#d4d4d4;"></div>
<div class="b" style="left:624px;top:226px;width:1px;height:350px;background:#d4d4d4;"></div>
<div class="b" style="left:722px;top:226px;width:1px;height:350px;background:#d4d4d4;"></div>
<div class="b" style="left:820px;top:226px;width:1px;height:350px;background:#d4d4d4;"></div>
<div class="b" style="left:37px;top:251px;width:815px;height:1px;background:#d4d4d4;"></div>
<div class="b" style="left:37px;top:277px;width:815px;height:1px;background:#d4d4d4;"></div>
<div class="b" style="left:37px;top:303px;width:815px;height:1px;background:#d4d4d4;"></div>
<div class="b" style="left:37px;top:329px;width:815px;height:1px;background:#d4d4d4;"></div>
<div class="b" style="left:37px;top:355px;width:815px;height:1px;background:#d4d4d4;"></div>
<div class="b" style="left:37px;top:381px;width:815px;height:1px;background:#d4d4d4;"></div>
<div class="b" style="left:37px;top:407px;width:815px;height:1px;background:#d4d4d4;"></div>
<div class="b" style="left:37px;top:433px;width:815px;height:1px;background:#d4d4d4;"></div>
<div class="b" style="left:37px;top:459px;width:815px;height:1px;background:#d4d4d4;"></div>
<div class="b" style="left:37px;top:485px;width:815px;height:1px;background:#d4d4d4;"></div>
<div class="b" style="left:37px;top:511px;width:815px;height:1px;background:#d4d4d4;"></div>
<div class="b" style="left:37px;top:537px;width:815px;height:1px;background:#d4d4d4;"></div>
<div class="b" style="left:37px;top:563px;width:815px;height:1px;background:#d4d4d4;"></div>
<div class="b" style="left:37px;top:226px;width:490px;height:26px;background:#d9e1f2;"></div>
<div class="b" style="left:135px;top:252px;width:293px;height:129px;background:#fff;"></div>
<div class="b" style="left:136px;top:253px;width:291px;height:127px;background:#c6c6c6;"></div>
<div class="b" style="left:232px;top:253px;width:1px;height:127px;background:#adadad;"></div>
<div class="b" style="left:330px;top:253px;width:1px;height:127px;background:#adadad;"></div>
<div class="b" style="left:136px;top:277px;width:291px;height:1px;background:#adadad;"></div>
<div class="b" style="left:136px;top:303px;width:291px;height:1px;background:#adadad;"></div>
<div class="b" style="left:136px;top:329px;width:291px;height:1px;background:#adadad;"></div>
<div class="b" style="left:136px;top:355px;width:291px;height:1px;background:#adadad;"></div>
<div class="b" style="left:135px;top:252px;width:97px;height:25px;background:#fff;"></div>
<div class="t" style="left:37px;top:230.0px;font-size:19.5px;color:#000;width:97px;text-align:center;">姓名</div>
<div class="t" style="left:135px;top:230.0px;font-size:19.5px;color:#000;width:97px;text-align:center;">一月</div>
<div class="t" style="left:233px;top:230.0px;font-size:19.5px;color:#000;width:97px;text-align:center;">二月</div>
<div class="t" style="left:331px;top:230.0px;font-size:19.5px;color:#000;width:97px;text-align:center;">三月</div>
<div class="t" style="left:429px;top:230.0px;font-size:19.5px;color:#000;width:97px;text-align:center;">迷你图表</div>
<div class="t" style="left:37px;top:256.0px;font-size:19.5px;color:#000;width:97px;text-align:center;">小白</div>
<div class="t" style="left:135px;top:257.2px;font-size:19.3px;color:#1a1a1a;width:97px;text-align:center;">5240</div>
<div class="t" style="left:233px;top:257.2px;font-size:19.3px;color:#1a1a1a;width:97px;text-align:center;">5231</div>
<div class="t" style="left:331px;top:257.2px;font-size:19.3px;color:#1a1a1a;width:97px;text-align:center;">5234</div>
<div class="t" style="left:37px;top:282.0px;font-size:19.5px;color:#000;width:97px;text-align:center;">小黄</div>
<div class="t" style="left:135px;top:283.2px;font-size:19.3px;color:#1a1a1a;width:97px;text-align:center;">3562</div>
<div class="t" style="left:233px;top:283.2px;font-size:19.3px;color:#1a1a1a;width:97px;text-align:center;">4562</div>
<div class="t" style="left:331px;top:283.2px;font-size:19.3px;color:#1a1a1a;width:97px;text-align:center;">5231</div>
<div class="t" style="left:37px;top:308.0px;font-size:19.5px;color:#000;width:97px;text-align:center;">小绿</div>
<div class="t" style="left:135px;top:309.2px;font-size:19.3px;color:#1a1a1a;width:97px;text-align:center;">4258</div>
<div class="t" style="left:233px;top:309.2px;font-size:19.3px;color:#1a1a1a;width:97px;text-align:center;">5622</div>
<div class="t" style="left:331px;top:309.2px;font-size:19.3px;color:#1a1a1a;width:97px;text-align:center;">6598</div>
<div class="t" style="left:37px;top:334.0px;font-size:19.5px;color:#000;width:97px;text-align:center;">小蓝</div>
<div class="t" style="left:135px;top:335.2px;font-size:19.3px;color:#1a1a1a;width:97px;text-align:center;">2864</div>
<div class="t" style="left:233px;top:335.2px;font-size:19.3px;color:#1a1a1a;width:97px;text-align:center;">6285</div>
<div class="t" style="left:331px;top:335.2px;font-size:19.3px;color:#1a1a1a;width:97px;text-align:center;">5421</div>
<div class="t" style="left:37px;top:360.0px;font-size:19.5px;color:#000;width:97px;text-align:center;">小黑</div>
<div class="t" style="left:135px;top:361.2px;font-size:19.3px;color:#1a1a1a;width:97px;text-align:center;">5523</div>
<div class="t" style="left:233px;top:361.2px;font-size:19.3px;color:#1a1a1a;width:97px;text-align:center;">5642</div>
<div class="t" style="left:331px;top:361.2px;font-size:19.3px;color:#1a1a1a;width:97px;text-align:center;">5632</div>
<div class="b" style="left:133px;top:250px;width:297px;height:133px;border:2px solid #217346;"></div>
<div class="b" style="left:425px;top:378px;width:7px;height:7px;background:#217346;border:1px solid #fff;"></div>
<div class="b" style="left:432px;top:385px;width:24px;height:24px;background:#fff;border:1px solid #217346;"></div>
<svg class="i" style="left:436px;top:389px;" width="16" height="16" viewBox="0 0 16 16"><path d="M6.600 2.200h7.900v12H1.400v-2.400" fill="none" stroke="#6e6e6e" stroke-width="1"/><rect x="6.600" y="1" width="8.400" height="2.500" fill="#6e6e6e"/><rect x="6.100" y="5.200" width="3.900" height="1.700" fill="#b8401c"/><rect x="4.900" y="8" width="8.100" height="1.800" fill="#2e75b6"/><rect x="4.900" y="11" width="5.900" height="1.800" fill="#6aa58f"/><path d="M2.500 0H6.800L4.300 4H6.500L0 11 2.300 5.700H0z" fill="#eabf73"/></svg>
<svg class="i" style="left:369px;top:359px;" width="15" height="16" viewBox="0 0 15 16"><path d="M5 1.500h4.500v4H13.500v4.500H9.500v4.500H5V10H1V5.500h4z" fill="#fff" stroke="#222" stroke-width="1.300"/></svg>
<div class="b" style="left:851px;top:226px;width:1px;height:351px;background:#a6a6a6;"></div>
<div class="b" style="left:855px;top:200px;width:12px;height:377px;background:#dcdcdc;"></div>
<div class="b" style="left:855px;top:202px;width:12px;height:15px;background:#fff;border:1px solid #c4c4c4;"></div>
<svg class="i" style="left:858px;top:207px;" width="7" height="4" viewBox="0 0 7 4"><path d="M0 4h7L3.500 0z" fill="#777"/></svg>
<div class="b" style="left:855px;top:217px;width:12px;height:223px;background:#fff;border:1px solid #c4c4c4;border-right:none;"></div>
<div class="b" style="left:855px;top:563px;width:12px;height:13px;background:#fff;border:1px solid #c4c4c4;"></div>
<svg class="i" style="left:858px;top:568px;" width="7" height="4" viewBox="0 0 7 4"><path d="M0 0h7L3.500 4z" fill="#777"/></svg>
<!-- sheet tabs -->
<div class="b" style="left:0px;top:576px;width:867px;height:1px;background:#ababab;"></div>
<div class="b" style="left:0px;top:577px;width:867px;height:27px;background:#e6e6e6;"></div>
<svg class="i" style="left:24px;top:586px;" width="5" height="7" viewBox="0 0 5 7"><path d="M4.500 0v7L0 3.500z" fill="#c6c6c6"/></svg>
<svg class="i" style="left:53px;top:586px;" width="5" height="7" viewBox="0 0 5 7"><path d="M0 0v7L4.500 3.500z" fill="#c6c6c6"/></svg>
<div class="b" style="left:97px;top:580px;width:1px;height:20px;background:#ababab;"></div>
<div class="t" style="left:98px;top:578.3px;font-size:13.3px;color:#444;width:68px;text-align:center;">Sheet1</div>
<div class="b" style="left:166px;top:576px;width:69px;height:25px;background:#fff;border-left:1px solid #ababab;border-right:1px solid #ababab;border-bottom:2px solid #217346;"></div>
<div class="t" style="left:166px;top:578.3px;font-size:13.3px;color:#217346;width:69px;text-align:center;">Sheet2</div>
<svg class="i" style="left:267px;top:581px;" width="18" height="18" viewBox="0 0 18 18"><circle cx="9" cy="8.700" r="7.700" fill="none" stroke="#777" stroke-width="1.100"/><path d="M9 4.700v8M5 8.700h8" stroke="#666" stroke-width="1.700"/></svg>
<div class="b" style="left:522px;top:586px;width:2px;height:2px;background:#b5b5b5;"></div>
<div class="b" style="left:522px;top:590px;width:2px;height:2px;background:#b5b5b5;"></div>
<div class="b" style="left:522px;top:594px;width:2px;height:2px;background:#b5b5b5;"></div>
<div class="b" style="left:539px;top:583px;width:313px;height:15px;background:#dcdcdc;"></div>
<div class="b" style="left:539px;top:583px;width:15px;height:15px;background:#fff;border:1px solid #c4c4c4;"></div>
<svg class="i" style="left:544px;top:587px;" width="4" height="7" viewBox="0 0 4 7"><path d="M4 0v7L0 3.500z" fill="#666"/></svg>
<div class="b" style="left:554px;top:583px;width:247px;height:15px;background:#fff;border:1px solid #c4c4c4;"></div>
<div class="b" style="left:837px;top:583px;width:15px;height:15px;background:#fff;border:1px solid #c4c4c4;"></div>
<svg class="i" style="left:843px;top:587px;" width="4" height="7" viewBox="0 0 4 7"><path d="M0 0v7L4 3.500z" fill="#666"/></svg>
<!-- status bar -->
<div class="b" style="left:0px;top:604px;width:867px;height:1px;background:#c6c6c6;"></div>
<div class="b" style="left:0px;top:605px;width:867px;height:10px;background:#f1f1f1;"></div>
<div class="t" style="left:3.7px;top:604.4px;font-size:12px;color:#444;">就绪</div>
<div class="t" style="left:287.3px;top:604.4px;font-size:12px;color:#444;">平均值: 5127</div>
<div class="t" style="left:418.8px;top:604.4px;font-size:12px;color:#444;">计数: 15</div>
<div class="t" style="left:480.4px;top:604.4px;font-size:12px;color:#444;">求和: 76905</div>
<div class="b" style="left:565px;top:605px;width:38px;height:10px;background:#c6c6c6;"></div>
<svg class="i" style="left:577px;top:608px;" width="14" height="7" viewBox="0 0 14 7"><path d="M.5 7V.5h12.500V7M4.700 .5V7M8.900 .5V7M.5 4.500h12.500" fill="none" stroke="#444" stroke-width="1"/></svg>
<svg class="i" style="left:615px;top:608px;" width="14" height="7" viewBox="0 0 14 7"><path d="M.5 7V.5h12.500V7M3.500 7V3.500h6.500V7" fill="none" stroke="#444" stroke-width="1"/></svg>
<svg class="i" style="left:653px;top:608px;" width="14" height="7" viewBox="0 0 14 7"><path d="M.5 7V.5h12.500V7M4.700 .5V7M8.900 .5V7" fill="none" stroke="#444" stroke-width="1"/></svg>
<div class="b" style="left:684px;top:613px;width:6px;height:2px;background:#444;"></div>
<div class="b" style="left:694px;top:613px;width:100px;height:1px;background:#777;"></div>
<div class="b" style="left:748px;top:608px;width:4px;height:7px;background:#444;"></div>
<div class="b" style="left:743px;top:611px;width:1px;height:4px;background:#777;"></div>
<div class="b" style="left:798px;top:613px;width:8px;height:2px;background:#444;"></div>
<div class="b" style="left:801px;top:610px;width:2px;height:5px;background:#444;"></div>
<div class="t" style="left:821.3px;top:604.4px;font-size:12px;color:#444;">136%</div>
</body></html>
